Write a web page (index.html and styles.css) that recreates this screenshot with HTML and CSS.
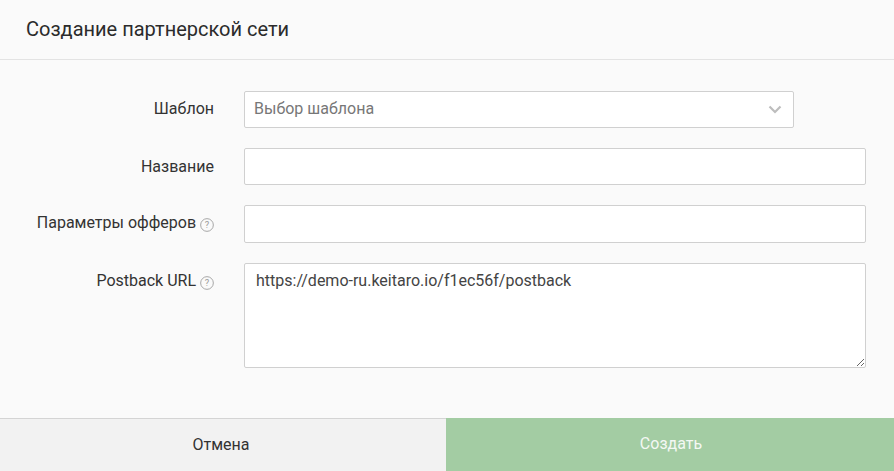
FILE: index.html
```html
<!DOCTYPE html>
<html lang="ru">
<head>
<meta charset="utf-8">
<title>Создание партнерской сети</title>
<link rel="stylesheet" href="styles.css">
</head>
<body>
<div class="dialog">
  <header class="dialog-header">Создание партнерской сети</header>
  <form class="form">
    <div class="row">
      <label class="label">Шаблон</label>
      <div class="select">
        <span class="placeholder">Выбор шаблона</span>
        <svg class="chevron" width="14" height="9" viewBox="0 0 14 9"><path d="M1.500 1.500 7 7l5.500-5.500" fill="none" stroke="#bdbdbd" stroke-width="2.200"/></svg>
      </div>
    </div>
    <div class="row">
      <label class="label label-name">Название</label>
      <input class="input" type="text">
    </div>
    <div class="row row-tall">
      <label class="label">Параметры офферов
        <svg class="help" width="14" height="14" viewBox="0 0 15 15"><circle cx="7.500" cy="7.500" r="6.800" fill="none" stroke="#a0a0a0"/><text x="7.500" y="11" text-anchor="middle" class="help-mark">?</text></svg>
      </label>
      <input class="input" type="text">
    </div>
    <div class="row">
      <label class="label">Postback URL
        <svg class="help" width="14" height="14" viewBox="0 0 15 15"><circle cx="7.500" cy="7.500" r="6.800" fill="none" stroke="#a0a0a0"/><text x="7.500" y="11" text-anchor="middle" class="help-mark">?</text></svg>
      </label>
      <textarea class="textarea">https://demo-ru.keitaro.io/f1ec56f/postback</textarea>
    </div>
  </form>
  <footer class="dialog-footer">
    <button class="btn btn-cancel" type="button">Отмена</button>
    <button class="btn btn-submit" type="button">Создать</button>
  </footer>
</div>
</body>
</html>
```
FILE: styles.css
```css
* { box-sizing: border-box; }
html, body { margin: 0; height: 100%; }
body {
  font-family: Roboto, "Liberation Sans", sans-serif;
  color: #333;
  background: #fafafa;
  overflow: hidden;
}
.dialog {
  display: flex;
  flex-direction: column;
  height: 471px;
}
.dialog-header {
  height: 60px;
  padding: 0 26px 1px;
  display: flex;
  align-items: center;
  font-size: 20px;
  color: #2b2b2b;
  border-bottom: 1px solid #e3e3e3;
}
.form {
  flex: 1;
  padding: 31px 28px 0 0;
  display: flex;
  flex-direction: column;
  gap: 20px;
}
.row {
  display: flex;
  gap: 30px;
  align-items: flex-start;
}
.label {
  width: 214px;
  flex: none;
  height: 37px;
  padding-top: 8px;
  text-align: right;
  font-size: 16px;
  line-height: 19px;
  color: #333;
}
.label-name { padding-top: 9px; }
.help { vertical-align: -4px; }
.help-mark { font-size: 10px; fill: #999; font-family: Roboto, sans-serif; }
.select, .input, .textarea {
  background: #fff;
  border: 1px solid #d0d0d0;
  border-radius: 2px;
  font-family: inherit;
  font-size: 16px;
}
.select {
  width: 550px;
  height: 37px;
  padding: 0 11px 0 9px;
  display: flex;
  align-items: center;
  justify-content: space-between;
}
.placeholder { color: #777; margin-bottom: 2px; }
.chevron { display: block; }
.input {
  flex: 1;
  min-width: 0;
  height: 37px;
  display: block;
}
.row-tall .input { height: 38px; }
.textarea {
  flex: 1;
  min-width: 0;
  height: 105px;
  padding: 7px 11px 7px 11px;
  line-height: 19px;
  color: #444;
  display: block;
  resize: vertical;
}
.dialog-footer {
  height: 53px;
  display: flex;
}
.btn {
  border: 0;
  padding: 0;
  font-family: inherit;
  font-size: 16px;
}
.btn-cancel {
  width: 446px;
  background: #f2f2f2;
  border-top: 1px solid #d4d4d4;
  color: #333;
  padding: 0 4px 2px 0;
}
.btn-submit {
  flex: 1;
  background: #a3cca3;
  color: #f4f8f4;
  padding: 0 0 2px 2px;
}
```
